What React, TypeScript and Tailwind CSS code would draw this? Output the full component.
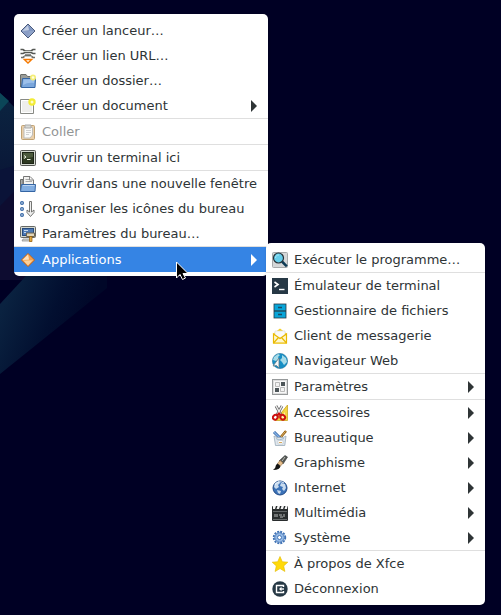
import type { ReactNode } from "react";

type Item = {
  label: string;
  icon: ReactNode;
  disabled?: boolean;
  submenu?: boolean;
  children?: Item[][];
};

function Icon({ children }: { children: ReactNode }) {
  return (
    <svg viewBox="0 0 16 16" className="size-4 shrink-0" aria-hidden="true">
      {children}
    </svg>
  );
}

const Launcher = (
  <Icon>
    <path d="M8 1 15 8 8 15 1 8Z" fill="#8fa3c8" stroke="#4a5a7c" />
    <path d="M8 2 14 8H9Z" fill="#7f95c0" />
    <path d="M2.500 8 8 2.500 9 7Z" fill="#c3cee3" />
    <path d="M8 14 2.500 8.500 9 8Z" fill="#8a9dc5" />
  </Icon>
);

const LinkUrl = (
  <Icon>
    <path d="M.5 1.500H3L5 3H11L13 1.500H15.500" fill="none" stroke="#555753" strokeWidth="1.600" />
    <path d="M.5 5.500H3L5 4.500H11L13 5.500H15.500" fill="none" stroke="#555753" strokeWidth="1.600" />
    <path d="M3.500 3.500H12.500" stroke="#d3d7cf" />
    <path d="M1 9.500H3L5 8H11L13 9.500H15M5 7H11" fill="none" stroke="#6b6d69" strokeWidth="1.600" />
    <path d="M4.500 8.500H11.500" stroke="#d3d7cf" strokeWidth=".8" />
    <path d="M4.300 11.500H11.700L8 15Z" fill="#fff" stroke="#f57900" strokeWidth="1.400" />
  </Icon>
);

const Folder = (
  <Icon>
    <path d="M.5 14V2Q.5 1.500 1 1.500H6L7.500 3.500H14V14Z" fill="#9a9c98" stroke="#6b6d69" />
    <path d="M2.500 5.500H15.500L15 14.500H1.500Z" fill="#7ba7dc" stroke="#3465a4" />
    <path d="M3.500 6.500H14.500L14 10Q8 9 3 12Z" fill="#9dc0ea" />
    <circle cx="13" cy="4.500" r="3" fill="#f4ee78" />
    <circle cx="13" cy="4.500" r="1.300" fill="#fffde0" />
  </Icon>
);

const NewDocument = (
  <Icon>
    <path d="M.5 1.500H13.500V15.500H.5Z" fill="#eeeeec" stroke="#888a85" />
    <path d="M1.500 2.500H12.500V14.500H1.500Z" fill="none" stroke="#fff" />
    <circle cx="12" cy="4" r="3.700" fill="#f3ec35" />
    <circle cx="12" cy="4" r="1.500" fill="#fffcc9" />
  </Icon>
);

const Paste = (
  <Icon>
    <g opacity=".55">
      <rect x="1.500" y="1.500" width="13" height="14" rx="1" fill="#d9a866" stroke="#8f5902" />
      <path d="M4 3.500H12.500V11L10 14H4Z" fill="#f6f6f4" stroke="#888a85" />
      <path d="M5 1H11V4H5Z" fill="#babdb6" stroke="#666" />
      <path d="M6 6.500H11M6 8.500H11M6 10.500H9" stroke="#aaa" />
    </g>
  </Icon>
);

const Terminal = (
  <Icon>
    <rect x=".5" y=".5" width="15" height="15" rx="1" fill="#d3d7cf" stroke="#555753" />
    <rect x="2.500" y="2.500" width="11" height="11" fill="#2e3a22" stroke="#1c2415" />
    <path d="M3 3H13V7L3 9Z" fill="#4c5a3d" />
    <path d="M4 5.500 6 7 4 8.500M7 9.500H10.500" fill="none" stroke="#f2f5e8" />
  </Icon>
);

const OpenFolder = (
  <Icon>
    <path d="M.5 14V3.500H3V9" fill="#aaa" stroke="#6b6d69" />
    <path d="M3.500 9V.5H10L13.500 4V9Z" fill="#f2f2f0" stroke="#777" />
    <path d="M5.500 3.500H9M5.500 5.500H12" stroke="#aaa" />
    <path d="M9.500 1V4H13" fill="#fff" stroke="#888" />
    <path d="M1.500 8.500H15.500L15 15.500H.5Z" fill="#82ade0" stroke="#3465a4" />
    <path d="M3 9.500H14.500" stroke="#bad2ef" />
  </Icon>
);

const Arrange = (
  <Icon>
    <g fill="#e6f0fb" stroke="#3465a4" strokeWidth="1.200">
      <circle cx="2" cy="2" r="1.400" />
      <circle cx="2" cy="8" r="1.400" />
      <circle cx="2" cy="14" r="1.400" />
    </g>
    <path d="M9.500 .5H11.500V11L14 9V11.500L10.500 15.500 7 11.500V9L9.500 11Z" fill="#eee" stroke="#666864" strokeWidth=".9" />
  </Icon>
);

const DesktopSettings = (
  <Icon>
    <rect x=".5" y=".5" width="15" height="11" rx="1" fill="#d3d7cf" stroke="#666864" />
    <rect x="2.500" y="2.500" width="11" height="7" fill="#4b78b4" stroke="#274b7d" />
    <path d="M4 4.500H8M4 6.500H6" stroke="#c6d8ee" />
    <path d="M3 13H10L11 15H2Z" fill="#d5d6d2" stroke="#888" strokeWidth=".7" />
    <path d="M6.500 7H14.500V10.500H6.500Z" fill="#e0d5b9" stroke="#6e6450" />
    <path d="M9.500 10.500H12V15.500H9.500Z" fill="#e3a942" stroke="#8f5902" strokeWidth=".7" />
  </Icon>
);

const Applications = (
  <Icon>
    <path d="M8 1.500 14.500 8 8 14.500 1.500 8Z" fill="#f9b66a" stroke="#ce5c00" />
    <path d="M8 2.500 13.500 8H9Z" fill="#f7a04b" />
    <path d="M2.500 8 8 2.500 9 7.500Z" fill="#ffe2bd" />
    <path d="M8 13.500 4 9 12 8.500Z" fill="#fcd19b" />
  </Icon>
);

const Run = (
  <Icon>
    <rect x=".5" y=".5" width="15" height="15" rx="1" fill="#d5d7d8" stroke="#a6a9aa" />
    <path d="M10 9.500 14.800 14.300" stroke="#0d3b55" strokeWidth="2.500" />
    <circle cx="6.500" cy="6" r="5" fill="#65cdea" stroke="#263238" strokeWidth="1.200" />
    <path d="M3.500 6A3 3 0 0 1 7 3" fill="none" stroke="#a8e9f8" />
  </Icon>
);

const TerminalEmulator = (
  <Icon>
    <path d="M0 0H16V16H0Z" fill="#263845" />
    <path d="M2.500 4 6 6.500 2.500 9" fill="none" stroke="#fff" strokeWidth="1.600" />
    <path d="M7 11.500H12.500" stroke="#fff" strokeWidth="1.400" />
  </Icon>
);

const FileManager = (
  <Icon>
    <rect x="2" y="1" width="12" height="14" fill="#08a5d9" stroke="#263845" strokeWidth=".8" />
    <path d="M2 8H14" stroke="#263845" strokeWidth="1.200" />
    <path d="M6 4.500H10M6 11.500H10" stroke="#164e68" strokeWidth="1.300" />
  </Icon>
);

const Mail = (
  <Icon>
    <path d="M1 6 8 .5 15 6V15.500H1Z" fill="#f4cf20" />
    <path d="M3 3H13V10H3Z" fill="#fafafa" stroke="#ddd" strokeWidth=".7" />
    <path d="M1.500 6 8 10.500 14.500 6V15H1.500Z" fill="#fff7cc" stroke="#e9b900" strokeWidth="1.200" />
    <path d="M1.500 15 6.500 9.500M14.500 15 9.500 9.500" stroke="#e9b900" strokeWidth="1.200" />
  </Icon>
);

const Browser = (
  <Icon>
    <circle cx="8" cy="8" r="7.600" fill="#168fc5" stroke="#26739b" strokeWidth=".6" />
    <path d="M2 4 6 1 8 2 6 4 7 6 4 8 1 7ZM10 2 14 5 15 9 12 12 10 9 8 7 10 5Z" fill="#a7dbe8" />
    <path d="M7 5V15L4.500 12.500 1 13Z" fill="#f7f7f7" stroke="#607783" strokeWidth=".8" />
  </Icon>
);

const Settings = (
  <Icon>
    <rect x=".5" y=".5" width="15" height="15" fill="#ddd" stroke="#96999a" />
    <rect x="2" y="2" width="12" height="12" fill="#f8f8f8" />
    <path d="M3.500 3.500H7.500V7.500H3.500ZM8.500 8.500H12.500V12.500H8.500Z" fill="#f2f2f2" stroke="#aaa" strokeWidth=".8" />
    <path d="M9 3H13V7H9ZM3 9H7V13H3Z" fill="#4d5558" />
  </Icon>
);

const Accessories = (
  <Icon>
    <path d="M15.500 0V15.500H3Z" fill="#f4d342" stroke="#c49d13" strokeWidth=".7" />
    <path d="M13 7V13H8Z" fill="#fff3ad" />
    <path d="M4 1 9 10M10 1 5 10" stroke="#666" strokeWidth="2.800" />
    <path d="M4 1 9 10M10 1 5 10" stroke="#eee" strokeWidth="1.400" />
    <g fill="none" stroke="#cc1111" strokeWidth="2">
      <ellipse cx="3.300" cy="12.300" rx="2.200" ry="2.500" transform="rotate(45 3.300 12.300)" />
      <ellipse cx="10.700" cy="12.300" rx="2.200" ry="2.500" transform="rotate(-45 10.700 12.300)" />
      <path d="M5 10.500 7 8.500 9 10.500" />
    </g>
  </Icon>
);

const Office = (
  <Icon>
    <path d="M14 1 8 8" stroke="#8f5902" strokeWidth="2.400" />
    <path d="M13.500 1.500 8 8" stroke="#e1b878" strokeWidth="1" />
    <path d="M2 2 8 8" stroke="#3465a4" strokeWidth="3" />
    <path d="M2 2 8 8" stroke="#83b1e6" strokeWidth="1.500" />
    <path d="M2 6 5 7.500H11L14 6 12.800 15.500H3.500Z" fill="#dfe6ec" stroke="#9babb9" strokeWidth=".8" />
    <path d="M4 8.500 7 10 12 8.500" fill="none" stroke="#9fb8cd" />
    <path d="M6 10.500H11V14H6Z" fill="#fff" stroke="#bac2c9" strokeWidth=".6" />
    <path d="M7 12.500H10" stroke="#d6a75b" />
  </Icon>
);

const Graphics = (
  <Icon>
    <path d="M13 .5 15.500 2 11 9 7 6Z" fill="#555753" stroke="#2e3436" strokeWidth=".6" />
    <path d="M13 2 10 6" stroke="#babdb6" />
    <path d="M8 5.500 11 8 8.500 11 5.500 8.500Z" fill="#e4bd8c" stroke="#98703f" strokeWidth=".6" />
    <path d="M5.500 8.500 8.500 11Q8 15 1 15 4 12.500 4 10Z" fill="#151515" />
  </Icon>
);

const Internet = (
  <Icon>
    <circle cx="8" cy="8" r="7" fill="#3b72b8" stroke="#204a87" />
    <path d="M3 3 7 1 8 3 6 5 7 7 4 9 2 7ZM9 3 13 4 14 8 12 11 10 9 11 7 8 6ZM5 10 9 11 8 14 6 13Z" fill="#c9dbee" />
    <path d="M3 5A6 6 0 0 1 12 3" fill="none" stroke="#e4effb" />
  </Icon>
);

const Multimedia = (
  <Icon>
    <rect y="1" width="16" height="15" rx="1" fill="#292d2e" />
    <path d="M1 1H4L3 4H1ZM5.500 1H8L7 4H4.500ZM9.500 1H12L11 4H8.500ZM13.500 1H15.500L15 4H12.500Z" fill="#f5f5f5" />
    <path d="M1 6.500H15M1 14.500H15" stroke="#666a6b" />
    <path d="M3 9V12M5 9V12M7 10H10M8 12H11M12 9V12" stroke="#b6b9b8" />
  </Icon>
);

const System = (
  <Icon>
    <g fill="none" stroke="#3f72b5">
      <circle cx="7.500" cy="7.500" r="5.800" strokeWidth="1.800" strokeDasharray="2 1.037" />
      <circle cx="7.500" cy="7.500" r="4.700" fill="#a5c5ec" />
      <circle cx="7.500" cy="7.500" r="2" fill="#fff" />
    </g>
    <circle cx="7.500" cy="7.500" r="3.500" fill="none" stroke="#8bb3e3" />
  </Icon>
);

const Star = (
  <Icon>
    <path d="M8 .5 10.300 5.700 15.800 6.200 11.700 9.900 12.900 15.500 8 12.600 3.100 15.500 4.300 9.900 .2 6.200 5.700 5.700Z" fill="#ffd90a" stroke="#e0b800" strokeWidth=".6" />
  </Icon>
);

const Logout = (
  <Icon>
    <circle cx="8" cy="8" r="7.700" fill="#263845" />
    <path d="M11.500 6V4.500H4.500V11.500H11.500V10" fill="none" stroke="#fff" strokeWidth="1.400" />
    <path d="M8 8H12" stroke="#fff" strokeWidth="1.400" />
    <path d="M9.500 5.800V10.200L7 8Z" fill="#fff" />
  </Icon>
);

const applicationGroups: Item[][] = [
  [{ label: "Exécuter le programme…", icon: Run }],
  [
    { label: "Émulateur de terminal", icon: TerminalEmulator },
    { label: "Gestionnaire de fichiers", icon: FileManager },
    { label: "Client de messagerie", icon: Mail },
    { label: "Navigateur Web", icon: Browser },
  ],
  [{ label: "Paramètres", icon: Settings, submenu: true }],
  [
    { label: "Accessoires", icon: Accessories, submenu: true },
    { label: "Bureautique", icon: Office, submenu: true },
    { label: "Graphisme", icon: Graphics, submenu: true },
    { label: "Internet", icon: Internet, submenu: true },
    { label: "Multimédia", icon: Multimedia, submenu: true },
    { label: "Système", icon: System, submenu: true },
  ],
  [
    { label: "À propos de Xfce", icon: Star },
    { label: "Déconnexion", icon: Logout },
  ],
];

const desktopGroups: Item[][] = [
  [
    { label: "Créer un lanceur…", icon: Launcher },
    { label: "Créer un lien URL…", icon: LinkUrl },
    { label: "Créer un dossier…", icon: Folder },
    { label: "Créer un document", icon: NewDocument, submenu: true },
  ],
  [{ label: "Coller", icon: Paste, disabled: true }],
  [{ label: "Ouvrir un terminal ici", icon: Terminal }],
  [
    { label: "Ouvrir dans une nouvelle fenêtre", icon: OpenFolder },
    { label: "Organiser les icônes du bureau", icon: Arrange },
    { label: "Paramètres du bureau…", icon: DesktopSettings },
  ],
  [{ label: "Applications", icon: Applications, submenu: true, children: applicationGroups }],
];

function MenuRow({ item }: { item: Item }) {
  const open = Boolean(item.children);
  const tone = open ? "bg-[#3584e4] text-white" : item.disabled ? "text-[#929595]" : "text-[#2e3436]";
  return (
    <li role="none" className="relative">
      <button
        type="button"
        role="menuitem"
        disabled={item.disabled}
        aria-haspopup={item.submenu ? "menu" : undefined}
        aria-expanded={item.submenu ? open : undefined}
        className={`flex h-[25px] w-full items-center gap-1.5 pr-2.5 pl-1.5 text-left whitespace-nowrap ${tone}`}
      >
        {item.icon}
        <span className="grow">{item.label}</span>
        {item.submenu && (
          <svg viewBox="0 0 7 12" className="h-3 w-[7px] shrink-0" aria-hidden="true">
            <path d="M0 0 6 6 0 12Z" fill="currentColor" />
          </svg>
        )}
      </button>
      {item.children && (
        <div className="absolute -top-1 left-full -ml-0.5 w-[219px]">
          <Menu label={item.label} groups={item.children} />
        </div>
      )}
    </li>
  );
}

function Menu({ label, groups }: { label: string; groups: Item[][] }) {
  return (
    <div role="menu" aria-label={label} className="divide-y divide-[#dfdfdf] rounded-[5px] bg-white py-1 shadow-sm">
      {groups.map((group) => (
        <ul key={group[0].label} role="group">
          {group.map((item) => (
            <MenuRow key={item.label} item={item} />
          ))}
        </ul>
      ))}
    </div>
  );
}

function Wallpaper() {
  return (
    <svg className="absolute top-0 left-0 h-[400px] w-[120px]" viewBox="0 0 120 400" aria-hidden="true">
      <defs>
        <linearGradient id="beam" x1="10" y1="290" x2="85" y2="320" gradientUnits="userSpaceOnUse">
          <stop offset="0" stopColor="#0a2240" />
          <stop offset="0.6" stopColor="#020f30" />
          <stop offset="1" stopColor="#000728" />
        </linearGradient>
        <linearGradient id="edge" x1="0" y1="0" x2="0" y2="1">
          <stop offset="0" stopColor="#0b2541" />
          <stop offset="1" stopColor="#0a1838" />
        </linearGradient>
      </defs>
      <path d="M0 93 50 143V280H0Z" fill="#0d0c30" />
      <path d="M0 93 50 143V160L0 171Z" fill="url(#edge)" />
      <path d="M0 170 50 155 0 206Z" fill="#0a1338" />
      <path d="M0 93 9 101 0 111Z" fill="#0b4658" />
      <path d="M0 304 50 250H107V288L0 374Z" fill="url(#beam)" />
    </svg>
  );
}

function Cursor() {
  return (
    <svg viewBox="0 0 14 20" className="pointer-events-none absolute top-[261px] left-[175px] z-10 h-5 w-3.5" aria-hidden="true">
      <path d="M1.500 1V17L5 13.500 7.500 18.500 10.500 17 8 12.500H13Z" fill="#000" stroke="#fff" />
    </svg>
  );
}

export default function App() {
  return (
    <main className="relative min-h-screen overflow-hidden bg-[#000024] p-3.5 font-['DejaVu_Sans',sans-serif] text-[13px] leading-[19px]">
      <Wallpaper />
      <div className="relative w-[254px]">
        <Menu label="Bureau" groups={desktopGroups} />
      </div>
      <Cursor />
    </main>
  );
}
